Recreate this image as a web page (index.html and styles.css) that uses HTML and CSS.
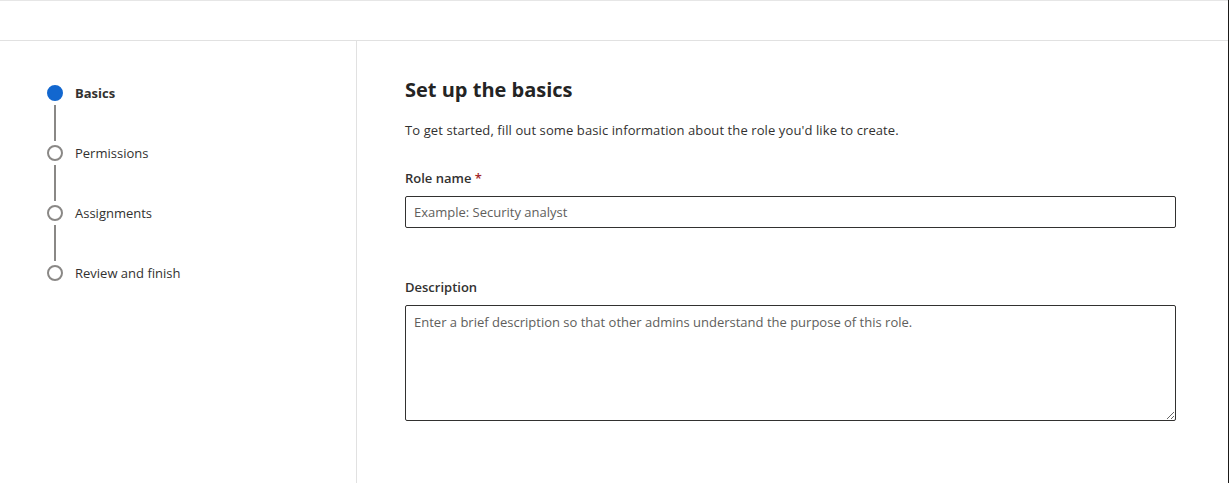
FILE: index.html
```html
<!DOCTYPE html>
<html lang="en">
<head>
<meta charset="utf-8">
<title>Set up the basics</title>
<link rel="stylesheet" href="styles.css">
</head>
<body>
<div class="page">
  <header class="topbar"></header>
  <div class="layout">
    <nav class="nav">
      <ol class="steps">
        <li class="step current"><span class="dot"></span><span class="label">Basics</span></li>
        <li class="connector"></li>
        <li class="step"><span class="dot"></span><span class="label">Permissions</span></li>
        <li class="connector"></li>
        <li class="step"><span class="dot"></span><span class="label">Assignments</span></li>
        <li class="connector"></li>
        <li class="step"><span class="dot"></span><span class="label">Review and finish</span></li>
      </ol>
    </nav>
    <main class="main">
      <h1 class="title">Set up the basics</h1>
      <p class="intro">To get started, fill out some basic information about the role you'd like to create.</p>
      <div class="field">
        <label class="field-label" for="rolename">Role name <span class="req">*</span></label>
        <input class="input" id="rolename" type="text" placeholder="Example: Security analyst">
      </div>
      <div class="field field-desc">
        <label class="field-label" for="desc">Description</label>
        <textarea class="textarea" id="desc" placeholder="Enter a brief description so that other admins understand the purpose of this role."></textarea>
      </div>
    </main>
  </div>
</div>
</body>
</html>
```
FILE: styles.css
```css
* { box-sizing: border-box; }
html, body { margin: 0; padding: 0; height: 100%; }
body {
  font-family: "Open Sans", "Noto Sans", sans-serif;
  color: #323130;
  background: #fff;
}
.page {
  height: 100%;
  display: flex;
  flex-direction: column;
  border-right: 1px solid #1b1a19;
}
.topbar {
  height: 41px;
  border-top: 1px solid #e6e6e6;
  border-bottom: 1px solid #e1e1e1;
  flex: none;
}
.layout {
  flex: 1;
  display: flex;
}
.nav {
  width: 357px;
  flex: none;
  border-right: 1px solid #e1e1e1;
  padding: 44px 0 0 47px;
}
.steps {
  list-style: none;
  margin: 0;
  padding: 0;
}
.step {
  display: flex;
  align-items: center;
  height: 16px;
  gap: 12px;
}
.dot {
  width: 16px;
  height: 16px;
  border-radius: 50%;
  border: 2px solid #8a8886;
  background: #fff;
  flex: none;
}
.current .dot {
  background: #1267cf;
  border-color: #1267cf;
}
.label {
  font-size: 13px;
  color: #323130;
  line-height: 16px;
}
.current .label { font-weight: 700; }
.connector {
  width: 2px;
  height: 36px;
  margin: 4px 0 4px 7px;
  background: #8a8886;
}
.main {
  flex: 1;
  padding: 35px 52px 0 48px;
}
.title {
  margin: 0;
  font-size: 20px;
  font-weight: 700;
  line-height: 28px;
  color: #242424;
}
.intro {
  margin: 16px 0 0;
  font-size: 13px;
  line-height: 20px;
  letter-spacing: 0.1px;
}
.field { margin-top: 28px; }
.field-label {
  display: block;
  font-size: 13px;
  font-weight: 600;
  line-height: 20px;
  margin-bottom: 8px;
}
.req { color: #a4262c; }
.input, .textarea {
  display: block;
  width: 100%;
  border: 1px solid #323130;
  border-radius: 2px;
  font-family: inherit;
  font-size: 13px;
  color: #323130;
  padding: 0 8px;
  outline: none;
  background: #fff;
}
.input { height: 32px; }
.input::placeholder, .textarea::placeholder { color: #605e5c; opacity: 1; }
.field-desc { margin-top: 49px; }
.textarea {
  height: 116px;
  padding: 6px 8px;
  resize: vertical;
  line-height: 20px;
}
```
